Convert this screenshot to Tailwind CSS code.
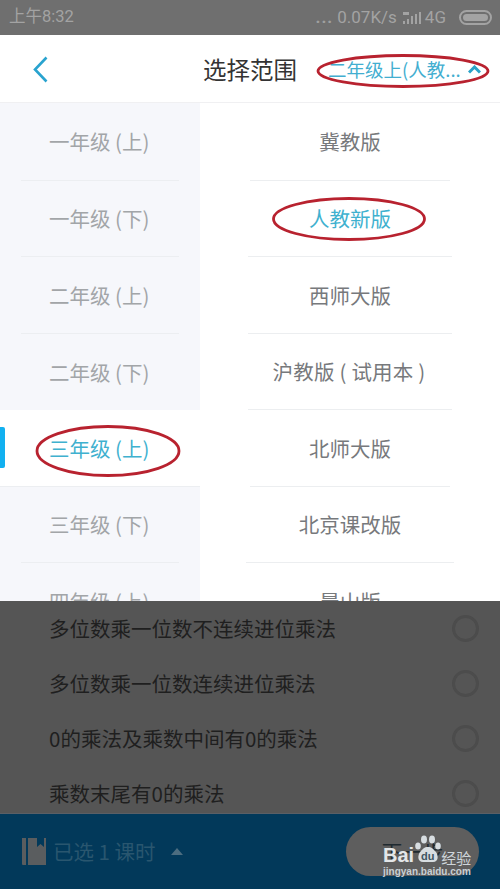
<!DOCTYPE html>
<html lang="zh-CN">
<head>
<meta charset="utf-8">
<script src="https://cdn.jsdelivr.net/npm/@tailwindcss/browser@4"></script>
</head>
<body class="m-0 bg-white">
<div class="relative w-[500px] h-[889px] overflow-hidden bg-white font-['Noto_Sans_CJK_SC','Noto_Sans',sans-serif]">
  <div class="h-[35px] bg-[#6f6f6f] flex items-center justify-between pl-[9px] pr-[8px] text-[#a3a3a3] text-[17px]">
    <span class="font-['Roboto','Noto_Sans_CJK_SC',sans-serif] text-[16.5px]">上午8:32</span>
    <div class="flex items-center font-['Roboto',sans-serif]">
      <span class="font-bold tracking-[1px] mr-[4px] text-[#a0a0a0]">...</span>
      <span>0.07K/s</span>
      <svg width="20" height="16" viewBox="0 0 20 16" class="ml-[5px]"><g fill="#a3a3a3"><rect x="1" y="11" width="2" height="3"/><rect x="5" y="9" width="2" height="5"/><rect x="9" y="6" width="2" height="8"/><rect x="13" y="4" width="2" height="10"/><rect x="17" y="2" width="2" height="12"/><rect x="1" y="2" width="6" height="3"/></g></svg>
      <span class="ml-[3px]">4G</span>
      <div class="ml-[13px] w-[33px] h-[15px] rounded-full border-2 border-[#a3a3a3] p-[2px]"><div class="h-full w-full rounded-full bg-[#a3a3a3]"></div></div>
    </div>
  </div>

  <div class="relative h-[68px] flex items-center pt-[2px] pl-[33px] border-b border-[#f0f0f2]">
    <svg width="15" height="27" viewBox="0 0 15 27" fill="none" stroke="#29a3cf" stroke-width="2.6"><path d="M13.500 1.500 2 13.500l11.500 12"/></svg>
    <span class="ml-[155px] text-[23.5px] leading-none text-[#333]">选择范围</span>
    <div class="ml-[31px] flex items-center text-[18.5px] leading-none text-[#42aed0] whitespace-nowrap">
      <span>二年级上(人教...</span>
      <svg width="13" height="9" viewBox="0 0 13 9" fill="none" stroke="#2ba3c9" stroke-width="3" class="ml-[7px]"><path d="M1 7.500 6.500 2 12 7.500"/></svg>
    </div>
    <svg class="absolute left-[316px] top-[18px]" width="174" height="36" viewBox="0 0 174 36" fill="none" stroke="#b8222f" stroke-width="2.800"><ellipse cx="87" cy="18" rx="85" ry="15.500"/></svg>
  </div>

  <div class="flex">
    <div class="w-[200px] text-[20.5px] leading-none text-[#a2a5a8]">
      <div class="bg-[#f6f7fb]">
        <div class="h-[77px] flex items-center pl-[49px]">一年级 (上)</div>
        <div class="mx-[21px] border-t border-[#eceef1]"></div>
        <div class="h-[75px] flex items-center pl-[49px]">一年级 (下)</div>
        <div class="mx-[21px] border-t border-[#eceef1]"></div>
        <div class="h-[76px] flex items-center pl-[49px]">二年级 (上)</div>
        <div class="mx-[21px] border-t border-[#eceef1]"></div>
        <div class="h-[76px] flex items-center pl-[49px]">二年级 (下)</div>
      </div>
      <div class="relative h-[76px] bg-white flex items-center pl-[49px] text-[#3fb1cf]">
        <div class="absolute left-0 top-[17px] w-[5px] h-[41px] rounded-r-[2px] bg-[#12b0f0]"></div>
        三年级 (上)
        <svg class="absolute left-[35px] top-[14px]" width="146" height="54" viewBox="0 0 146 54" fill="none" stroke="#b8222f" stroke-width="2.800"><ellipse cx="73" cy="27" rx="71" ry="24.500"/></svg>
      </div>
      <div class="bg-[#f6f7fb] border-t border-[#eceef1]">
        <div class="h-[75px] flex items-center pl-[49px]">三年级 (下)</div>
        <div class="mx-[21px] border-t border-[#eceef1]"></div>
        <div class="h-[76px] flex items-center pl-[49px]">四年级 (上)</div>
      </div>
    </div>

    <div class="w-[300px] text-[20.5px] leading-none text-[#77797c] text-center">
      <div class="h-[77px] flex items-center justify-center">冀教版</div>
      <div class="mx-[50px] border-t border-[#eceef0]"></div>
      <div class="relative h-[75px] flex items-center justify-center text-[#3fb1cf]">
        人教新版
        <svg class="absolute left-[71px] top-[15px]" width="156" height="46" viewBox="0 0 156 46" fill="none" stroke="#b8222f" stroke-width="2.800"><ellipse cx="78" cy="23" rx="75.500" ry="20.500"/></svg>
      </div>
      <div class="mx-[48px] border-t border-[#eceef0]"></div>
      <div class="h-[76px] flex items-center justify-center">西师大版</div>
      <div class="mx-[48px] border-t border-[#eceef0]"></div>
      <div class="h-[75px] flex items-center justify-center"><span class="tracking-[0.2px] -ml-[2px]">沪教版 ( 试用本 )</span></div>
      <div class="mx-[48px] border-t border-[#eceef0]"></div>
      <div class="h-[76px] flex items-center justify-center">北师大版</div>
      <div class="mx-[50px] border-t border-[#eceef0]"></div>
      <div class="h-[75px] flex items-center justify-center">北京课改版</div>
      <div class="mx-[46px] border-t border-[#eceef0]"></div>
      <div class="h-[76px] flex items-center justify-center">晨山版</div>
    </div>
  </div>

  <div class="absolute left-0 right-0 top-[601px] bottom-0 flex flex-col bg-[#555555]">
    <div class="h-[212px] text-[20.5px] leading-none text-[#1f1f1f]">
      <div class="h-[55px] flex items-center justify-between pl-[49px] pr-[21px]"><span>多位数乘一位数不连续进位乘法</span><span class="w-[27px] h-[27px] rounded-full border-[3px] border-[#4c4c4c]"></span></div>
      <div class="h-[55px] flex items-center justify-between pl-[49px] pr-[21px]"><span>多位数乘一位数连续进位乘法</span><span class="w-[27px] h-[27px] rounded-full border-[3px] border-[#4c4c4c]"></span></div>
      <div class="h-[55px] flex items-center justify-between pl-[49px] pr-[21px]"><span>0的乘法及乘数中间有0的乘法</span><span class="w-[27px] h-[27px] rounded-full border-[3px] border-[#4c4c4c]"></span></div>
      <div class="h-[47px] pt-[7px] flex items-center justify-between pl-[49px] pr-[21px]"><span>乘数末尾有0的乘法</span><span class="w-[27px] h-[27px] rounded-full border-[3px] border-[#4c4c4c]"></span></div>
    </div>
    <div class="relative flex-1 bg-[#02395a] border-t border-[#5a5f66] flex items-center pl-[21px]">
      <svg width="26" height="29" viewBox="0 0 26 29"><path d="M1 1h4v27H2a1 1 0 0 1-1-1zM7 1h9v9l3.500-3 3.500 3V1H25v27H7z" fill="#5a5d5f"/></svg>
      <span class="ml-[6px] text-[20.5px] leading-none text-[#29566f]">已选 1 课时</span>
      <svg width="12" height="7" viewBox="0 0 12 7" class="ml-[15px]"><path d="M6 0l6 7H0z" fill="#4c6d80"/></svg>
      <div class="absolute left-[346px] top-[13px] w-[133px] h-[49px] rounded-full bg-[#5e5e5e] flex items-center justify-center text-[20.5px] leading-none text-[#1f2a30]">下一步</div>
      <div class="absolute left-[383px] top-[21px] w-[90px] text-white">
        <svg class="absolute left-[31px] top-0" width="27" height="28" viewBox="0 0 27 28" fill="#d7dde1"><ellipse cx="4" cy="11" rx="2.800" ry="3.600"/><ellipse cx="10" cy="4.500" rx="3" ry="4"/><ellipse cx="18" cy="4.500" rx="3" ry="4"/><ellipse cx="24" cy="11" rx="2.800" ry="3.600"/><path d="M14 12c-4 0-5 2-7.500 4.500C3.500 19.500 3 27 9 27h10c6 0 5.500-7.500 2.500-10.500S18 12 14 12z"/></svg>
        <div class="flex items-end h-[30px] font-['Liberation_Sans',sans-serif] font-bold leading-none">
          <span class="text-[20px] text-[#e3e6e8]">Bai</span>
          <span class="ml-[27px] text-[15px] font-normal text-[#cfd6da] font-['Noto_Sans_CJK_SC',sans-serif]">经验</span>
        </div>
        <span class="absolute left-[38px] top-[16px] text-[11px] leading-none font-bold font-['Liberation_Sans',sans-serif] text-[#3f5563]">du</span>
        <div class="mt-[2px] text-[10px] leading-none font-['Liberation_Sans',sans-serif] font-bold text-[#c8d0d5] whitespace-nowrap">jingyan.baidu.com</div>
      </div>
    </div>
  </div>
</div>
</body>
</html>
